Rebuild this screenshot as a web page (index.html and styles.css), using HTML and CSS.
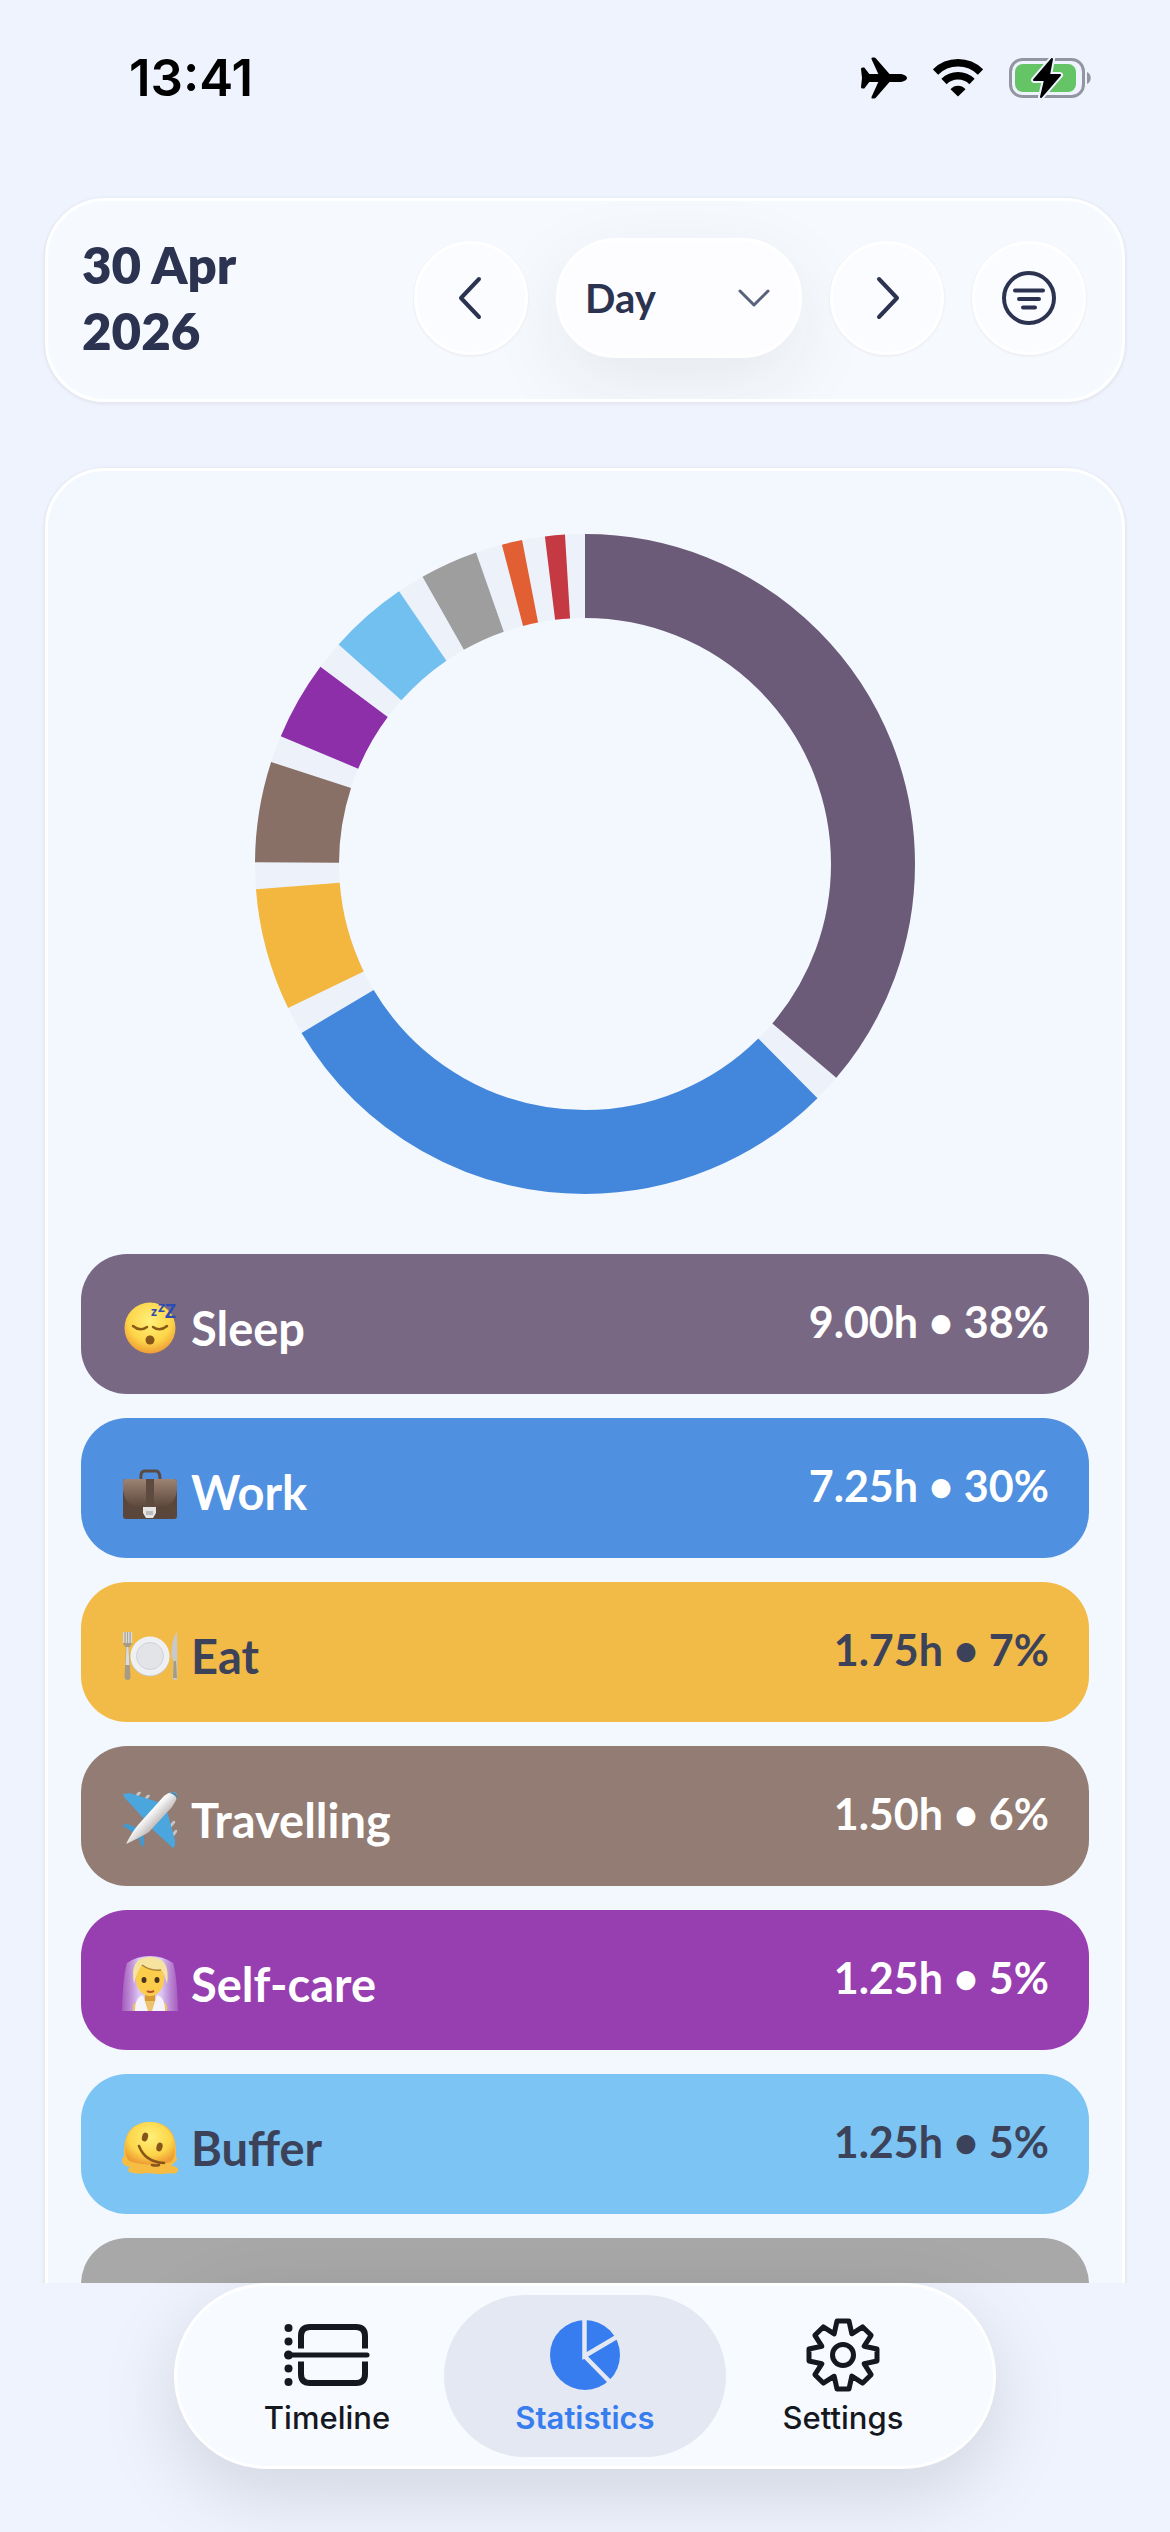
FILE: index.html
```
<!DOCTYPE html>
<html lang="en">
<head>
  <meta charset="UTF-8">
  <meta name="viewport" content="width=device-width, initial-scale=1.0">
  <title>Statistics</title>
  <link rel="stylesheet" href="styles.css">
</head>
<body>
  <div class="status-bar">
    <span class="time">13:41</span>
    <div class="status-icons">
      <svg width="46" height="42" viewBox="0 0 46 42">
        <path d="M0 12q0-1.500 1.500-1.500h1.800l5 6.500q4 0 9 0L10.500 2Q10 .5 11.500.5h1.700q1 0 1.800 1L28.500 17H38c4.500 0 8 1.700 8 4s-3.500 4-8 4h-9.500L15 40.500q-.8 1-1.800 1h-1.700q-1.500 0-1-1.500l6.800-15q-5 0-9 0l-5 6.500H1.500Q0 31.500 0 30l1-9z"/>
      </svg>
      <svg width="50" height="38" viewBox="0 0 50 38">
        <g fill="none" stroke="#000" stroke-width="7.500">
          <path d="M2.500 13a32 32 0 0 1 45 0"/>
          <path d="M11 22.500a20 20 0 0 1 28 0"/>
        </g>
        <path d="M25 37.500l-7.500-7.300c4-4.500 11-4.500 15 0z"/>
      </svg>
      <svg width="83" height="42" viewBox="0 0 83 42">
        <rect x="1.500" y="2.500" width="73" height="37" rx="12" fill="none" stroke="#9396a2" stroke-width="3"/>
        <path d="M78 15c5 2 5 10 0 12z" fill="#9396a2"/>
        <rect x="6" y="7" width="61" height="28" rx="8" fill="#65c466"/>
        <path d="M43 2L25 23h11l-4 17 19-22H40z" stroke="#eef3fe" stroke-width="6" stroke-linejoin="round"/>
        <path d="M43 2L25 23h11l-4 17 19-22H40z" stroke="#000" stroke-width="2" stroke-linejoin="round"/>
      </svg>
    </div>
  </div>

  <main>
    <header class="card toolbar">
      <h1>30 Apr<br>2026</h1>
      <div class="controls">
        <button class="round" aria-label="Previous">
          <svg width="60" height="60" viewBox="0 0 60 60"><path d="M38 11L20 30l18 19"/></svg>
        </button>
        <div class="period">
          <select aria-label="Period">
            <option>Day</option>
            <option>Week</option>
            <option>Month</option>
          </select>
          <svg class="chevron" width="32" height="18" viewBox="0 0 32 18"><path d="M2 2l14 14L30 2"/></svg>
        </div>
        <button class="round" aria-label="Next">
          <svg width="60" height="60" viewBox="0 0 60 60"><path d="M22 11l18 19-18 19"/></svg>
        </button>
        <button class="round" aria-label="Filter">
          <svg width="60" height="60" viewBox="0 0 60 60">
            <circle cx="30" cy="30" r="25"/>
            <path d="M16 22.500h28M20 31h20M24 39.500h12"/>
          </svg>
        </button>
      </div>
    </header>

    <section class="card stats">
      <svg class="donut" viewBox="0 0 660 660" role="img" aria-label="Time per activity">
        <circle cx="330" cy="330" r="288" stroke="#edf2fa"/>
        <g transform="rotate(-90 330 330)">
          <circle cx="330" cy="330" r="288" pathLength="360" stroke="#6b5b79" stroke-dasharray="130.400 360"/>
          <circle cx="330" cy="330" r="288" pathLength="360" stroke="#4387dd" stroke-dasharray="104 360" stroke-dashoffset="-135.200"/>
          <circle cx="330" cy="330" r="288" pathLength="360" stroke="#f3b740" stroke-dasharray="21.500 360" stroke-dashoffset="-244.100"/>
          <circle cx="330" cy="330" r="288" pathLength="360" stroke="#887066" stroke-dasharray="17.700 360" stroke-dashoffset="-270.300"/>
          <circle cx="330" cy="330" r="288" pathLength="360" stroke="#8e2faa" stroke-dasharray="13.900 360" stroke-dashoffset="-292.800"/>
          <circle cx="330" cy="330" r="288" pathLength="360" stroke="#71c0f0" stroke-dasharray="14 360" stroke-dashoffset="-311.700"/>
          <circle cx="330" cy="330" r="288" pathLength="360" stroke="#9e9e9e" stroke-dasharray="10.200 360" stroke-dashoffset="-330.500"/>
          <circle cx="330" cy="330" r="288" pathLength="360" stroke="#e25f33" stroke-dasharray="3.600 360" stroke-dashoffset="-345.400"/>
          <circle cx="330" cy="330" r="288" pathLength="360" stroke="#c53942" stroke-dasharray="3.500 360" stroke-dashoffset="-353"/>
        </g>
      </svg>

      <ul class="activities">
        <li class="sleep">
          <span class="name">
            <svg class="emoji" viewBox="0 0 58 58">
              <defs>
                <radialGradient id="face" cx=".5" cy=".35" r=".65">
                  <stop offset="0" stop-color="#fff07a"/>
                  <stop offset=".65" stop-color="#fdd549"/>
                  <stop offset="1" stop-color="#ee9c35"/>
                </radialGradient>
              </defs>
              <circle cx="29" cy="29" r="25.500" fill="url(#face)"/>
              <path d="M12 27q7 6 14 1M32 28q7 5 14-1" fill="none" stroke="#8a5a14" stroke-width="2.500" stroke-linecap="round"/>
              <ellipse cx="29" cy="41" rx="4.500" ry="4.500" fill="#86551a"/>
              <g class="zzz">
                <text x="30" y="17" font-size="13">z</text>
                <text x="37" y="13" font-size="15">z</text>
                <text x="44" y="19" font-size="18">Z</text>
              </g>
            </svg>
            Sleep
          </span>
          <span class="value">9.00h • 38%</span>
        </li>
        <li class="work">
          <span class="name">
            <svg class="emoji" viewBox="0 0 58 58">
              <defs>
                <linearGradient id="leather" x2="0" y2="1">
                  <stop offset="0" stop-color="#9c8373"/>
                  <stop offset="1" stop-color="#584337"/>
                </linearGradient>
              </defs>
              <path d="M20 16q-1-8 4-8h11q4 0 4 8" fill="none" stroke="#5b4a42" stroke-width="3"/>
              <rect x="2" y="16" width="54" height="40" rx="3" fill="#5a463b"/>
              <path d="M2 19q0-3 3-3h48q3 0 3 3v8q-2 18-22 19H24Q4 45 2 27z" fill="url(#leather)"/>
              <path d="M25 16h8v28h-8z" fill="#5e4a3e"/>
              <path d="M22 44h13v6l-3 5h-7l-3-5z" fill="#e5e5e5"/>
              <path d="M25 48h7v4h-7z" fill="#bcbcbc"/>
            </svg>
            Work
          </span>
          <span class="value">7.25h • 30%</span>
        </li>
        <li class="eat">
          <span class="name">
            <svg class="emoji" viewBox="0 0 58 58">
              <circle cx="29" cy="30" r="19.500" fill="#c9cbd0"/>
              <circle cx="29" cy="29" r="19.500" fill="#eef0f3"/>
              <circle cx="29" cy="29" r="13.500" fill="#e3e4e8" stroke="#cfd2d7"/>
              <path d="M2 5v10q0 4 3 5L3.500 50q0 3 3 3t3-3L8 20q3-1 3-5V5" fill="#a79c83"/>
              <path d="M2.800 5v11M5.400 5v11M7.800 5v11M10.400 5v11" stroke="#d8dade" stroke-width="1.500"/>
              <path d="M5.500 20h2l1 18h-4z" fill="#dadcdf"/>
              <path d="M56 5q-6 7-5.500 26H52l-.5 19q0 3 2.500 3t2.500-3z" fill="#c6c9ce"/>
              <path d="M52.500 34h2.500l1 17h-4z" fill="#a79c83"/>
            </svg>
            Eat
          </span>
          <span class="value">1.75h • 7%</span>
        </li>
        <li class="travel">
          <span class="name">
            <svg class="emoji" viewBox="0 0 58 58">
              <defs>
                <linearGradient id="hull" x1=".3" y1=".3" x2=".7" y2=".7">
                  <stop offset=".3" stop-color="#fff"/>
                  <stop offset="1" stop-color="#a59d9c"/>
                </linearGradient>
              </defs>
              <path d="M13 6l4-5q3-1 3 1l-5 6zM22 9l4-5q3-1 3 1l-5 6zM47 36l5-6q3-1 2 2l-6 7zM49 45l5-6q3-1 2 2l-5 7z" fill="#c6c6c8"/>
              <path d="M2 3l7-1 31 10-16 17L3 6zM54 55l-2 2-21-19 15-18 8 29z" fill="#4aa6dc"/>
              <path d="M1 34l5-1 16 6-6 5zM23 54l-2 2-5-13 6-6z" fill="#3f9bd4"/>
              <path d="M43 5q8-6 12-3 3 4-4 14L28 41q-8 5-23 12 6-12 12-19z" fill="url(#hull)"/>
              <path d="M48 2q4-2 7 0 2 3 1 6-2-5-8-6z" fill="#4c87ad"/>
            </svg>
            Travelling
          </span>
          <span class="value">1.50h • 6%</span>
        </li>
        <li class="care">
          <span class="name">
            <svg class="emoji" viewBox="0 0 58 58">
              <defs>
                <linearGradient id="steam">
                  <stop offset="0" stop-color="#c9a5e2" stop-opacity=".3"/>
                  <stop offset=".3" stop-color="#dcc8f2"/>
                  <stop offset=".7" stop-color="#dcc8f2"/>
                  <stop offset="1" stop-color="#c9a5e2" stop-opacity=".3"/>
                </linearGradient>
              </defs>
              <path d="M1 56Q2 20 6 8 16 1 29 1t23 7q4 12 5 48z" fill="url(#steam)"/>
              <path d="M12 56q-2-9 8-11l9-2 9 2q10 2 8 11z" fill="#ecc36c"/>
              <path d="M24 36h10v10H24z" fill="#d99a32"/>
              <path d="M14 56q0-14 8-16l5 16zM44 56q0-14-8-16l-5 16z" fill="#f5f3fb"/>
              <ellipse cx="29" cy="24" rx="14" ry="17" fill="#fbcd4b"/>
              <path d="M13 29Q8 2 29 2t17 27q-2-8-5-14-12 2-20-5-5 6-8 19z" fill="#f7e3a0"/>
              <path d="M21 10q8 6 19 5" fill="none" stroke="#a88036" stroke-width="1.500"/>
              <ellipse cx="23" cy="25" rx="2.500" ry="3" fill="#4a3321"/>
              <ellipse cx="36" cy="25" rx="2.500" ry="3" fill="#4a3321"/>
              <path d="M26 36q3 2 7 0" fill="none" stroke="#b8502f" stroke-width="2"/>
            </svg>
            Self-care
          </span>
          <span class="value">1.25h • 5%</span>
        </li>
        <li class="buffer">
          <span class="name">
            <svg class="emoji" viewBox="0 0 58 58">
              <path d="M3 38Q1 3 29 3t26 35q2 1 0 4-4 4-5 5 8 0 7 5-2 4-8 2-9 2-22 0-11 2-19-1-2-3 1-5-8-1-8-7 0-3 2-3z" fill="#f6bd42"/>
              <path d="M4 30C4 14 14 3 29 3s25 12 25 28q0 7-4 12-21 6-42-1-4-5-4-12z" fill="url(#face)"/>
              <ellipse cx="24" cy="18" rx="3" ry="4.500" fill="#86551a" transform="rotate(15 24 18)"/>
              <ellipse cx="38.500" cy="28" rx="3" ry="4.500" fill="#86551a" transform="rotate(15 38.500 28)"/>
              <path d="M18 27q6 16 25 17M31 46q4 1 7 0" fill="none" stroke="#86551a" stroke-width="2.500" stroke-linecap="round"/>
            </svg>
            Buffer
          </span>
          <span class="value">1.25h • 5%</span>
        </li>
        <li class="other"></li>
      </ul>
    </section>
  </main>

  <footer>
    <nav class="tab-bar">
      <a href="#timeline">
        <svg width="86" height="74" viewBox="0 0 86 74">
          <g fill="currentColor">
            <circle cx="4.500" cy="10" r="4"/>
            <circle cx="4.500" cy="23.500" r="4"/>
            <circle cx="4.500" cy="37" r="4.500"/>
            <circle cx="4.500" cy="50.500" r="4"/>
            <circle cx="4.500" cy="64" r="4"/>
          </g>
          <g fill="none" stroke="currentColor">
            <path d="M4 37h79" stroke-width="5" stroke-linecap="round"/>
            <path d="M17 30.500V18q0-9 9-9h46q9 0 9 9v12.500M17 43.500V56q0 9 9 9h46q9 0 9-9V43.500" stroke-width="6"/>
          </g>
        </svg>
        Timeline
      </a>
      <a href="#statistics" class="active">
        <svg width="74" height="74" viewBox="0 0 74 74">
          <circle cx="37" cy="37" r="35" fill="currentColor"/>
          <path d="M36.500 0v38L72 17M36.500 38L64 66" fill="none" stroke="#e4e8f2" stroke-width="4.500"/>
        </svg>
        Statistics
      </a>
      <a href="#settings">
        <svg width="74" height="74" viewBox="-37 -37 74 74">
          <g fill="none" stroke="currentColor" stroke-width="5" stroke-linejoin="round">
            <path d="M-6-34H6L8.800-21.200 19.700-28.100 28.100-19.700 21.200-8.800 34-6V6L21.200 8.800 28.100 19.700 19.700 28.100 8.800 21.200 6 34H-6L-8.800 21.200-19.700 28.100-28.100 19.700-21.200 8.800-34 6V-6L-21.200-8.800-28.100-19.700-19.700-28.100-8.800-21.200z"/>
            <circle r="10.500"/>
          </g>
        </svg>
        Settings
      </a>
    </nav>
  </footer>
</body>
</html>
```

FILE: styles.css
```
* {
  box-sizing: border-box;
}

body {
  margin: 0;
  height: 100vh;
  display: flex;
  flex-direction: column;
  background: #eef3fe;
  color: #2b3350;
  font-family: Lato, sans-serif;
}

.status-bar {
  display: flex;
  justify-content: space-between;
  align-items: center;
  padding: 48px 78px 70px 129px;
}

.time {
  font: 600 51px/60px Inter, sans-serif;
  color: #000;
}

.status-icons {
  display: flex;
  align-items: center;
  gap: 26px;
}

main {
  flex: 1;
  min-height: 0;
  overflow: hidden;
  padding: 20px 45px 0;
}

.card {
  border: 3px solid #fff;
  border-radius: 60px;
  background: #f3f8fe;
  box-shadow: 0 1px 2px 2px #e6e9f2;
}

.toolbar {
  display: flex;
  justify-content: space-between;
  align-items: center;
  height: 204px;
  padding: 0 36px 4px 34px;
  margin-bottom: 66px;
  background: #f6faff;
  overflow: hidden;
}

h1 {
  margin: 0;
  font-size: 51px;
  line-height: 66px;
  font-weight: 800;
}

.controls {
  display: flex;
  align-items: center;
  gap: 28px;
}

.round {
  display: flex;
  justify-content: center;
  align-items: center;
  width: 114px;
  height: 114px;
  padding: 0;
  border: 3px solid #fff;
  border-radius: 50%;
  background: #fbfcff;
  box-shadow: 0 1px 2px 1px #eeeff5;
  cursor: pointer;
  z-index: 1;
}

.round svg {
  fill: none;
  stroke: #2b3350;
  stroke-width: 4;
  stroke-linecap: round;
  stroke-linejoin: round;
}

.period {
  position: relative;
  width: 246px;
}

.period select {
  appearance: none;
  display: block;
  width: 100%;
  height: 120px;
  padding: 0 26px;
  border: 3px solid #fff;
  border-radius: 60px;
  background: #fdfdff;
  box-shadow: 0 24px 80px rgba(40, 20, 20, 0.08);
  color: #2b3350;
  font: 700 40px/48px Lato, sans-serif;
}

.chevron {
  position: absolute;
  right: 32px;
  top: 51px;
  fill: none;
  stroke: #59627b;
  stroke-width: 3;
  stroke-linecap: round;
  stroke-linejoin: round;
  pointer-events: none;
}

.stats {
  padding: 63px 33px;
}

.donut {
  display: block;
  width: 660px;
  max-width: 100%;
  margin: 0 auto 60px;
  fill: none;
  stroke-width: 84;
}

.activities {
  list-style: none;
  margin: 0;
  padding: 0;
  display: flex;
  flex-direction: column;
  gap: 24px;
}

.activities li {
  display: flex;
  justify-content: space-between;
  align-items: center;
  height: 140px;
  padding: 0 40px;
  border-radius: 46px;
  color: #fff;
}

.name {
  display: flex;
  align-items: center;
  gap: 12px;
  padding-top: 8px;
  font-size: 47px;
  line-height: 60px;
  font-weight: 700;
}

.value {
  padding-bottom: 4px;
  font-size: 43px;
  line-height: 60px;
  font-weight: 700;
}

.emoji {
  width: 58px;
  height: 58px;
  overflow: visible;
}

.zzz {
  fill: #2c4cb4;
  font-family: Lato, sans-serif;
  font-weight: 900;
}

.activities .sleep {
  background: #786884;
}

.activities .work {
  background: #4f90e0;
}

.activities .eat {
  background: #f2bb48;
  color: #3b4259;
}

.activities .travel {
  background: #927c73;
}

.activities .care {
  background: #973fb0;
}

.activities .buffer {
  background: #7bc4f3;
  color: #3b4259;
}

.activities .other {
  background: #a8a8a9;
}

footer {
  padding: 0 24px 63px;
}

.tab-bar {
  position: relative;
  display: grid;
  grid-template-columns: repeat(3, 1fr);
  max-width: 822px;
  margin: 0 auto;
  padding: 9px 21px;
  border: 3px solid #fff;
  border-radius: 93px;
  background: #f7faff;
  box-shadow: 0 24px 80px rgba(0, 0, 0, 0.13);
}

.tab-bar a {
  display: flex;
  flex-direction: column;
  align-items: center;
  gap: 8px;
  height: 162px;
  margin: 0 -12px;
  padding-top: 23px;
  border-radius: 81px;
  color: #15181e;
  font: 500 31px/36px Inter, sans-serif;
  text-decoration: none;
}

.tab-bar .active {
  background: #e4e8f2;
  color: #377df0;
  font-weight: 600;
}
```
